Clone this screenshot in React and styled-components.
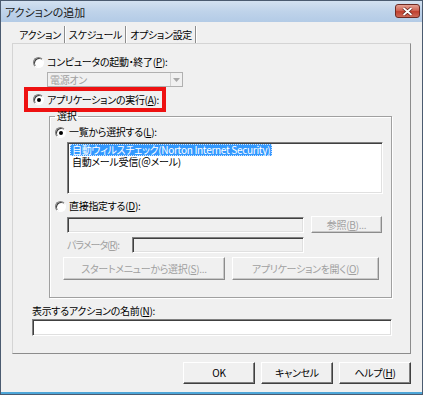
import React from "react";
import styled, { createGlobalStyle } from "styled-components";

const GlobalStyle = createGlobalStyle`
  html, body {
    margin: 0;
    padding: 0;
    background: #f0f0f0;
  }
  body {
    font-family: "Noto Sans CJK JP", "Noto Sans", sans-serif;
    font-size: 10px;
    line-height: 12px;
    font-feature-settings: "palt";
    letter-spacing: -0.3px;
    color: #000;
  }
  * {
    box-sizing: border-box;
  }
`;

const Frame = styled.div`
  width: 423px;
  height: 395px;
  display: flex;
  flex-direction: column;
  background: #f0f0f0;
  border: 1px solid #4b5b70;
  box-shadow: inset 0 -2px 0 #4ea6d8;
`;

const TitleBar = styled.div`
  height: 21px;
  flex: none;
  display: flex;
  align-items: center;
  justify-content: space-between;
  padding: 0 2px 0 4px;
  background: linear-gradient(to bottom, #d3e1f0 0%, #bfd3ea 50%, #b3cbe6 100%);
`;

const Title = styled.span`
  font-size: 11px;
  letter-spacing: 0;
  color: #1b1b1b;
`;

const CloseButton = styled.div`
  width: 25px;
  height: 14px;
  margin-top: -1px;
  border: 1px solid #6e2a22;
  border-radius: 3px;
  display: flex;
  align-items: center;
  justify-content: center;
  background: linear-gradient(to bottom, #e4a092 0%, #d06656 45%, #c0402f 55%, #cd6a58 100%);
`;

const Body = styled.div`
  flex: 1;
  display: flex;
  flex-direction: column;
  padding: 4px 11px 0 11px;
`;

const TabBar = styled.div`
  display: flex;
  height: 17px;
  padding-left: 3px;
`;

const Tab = styled.div`
  display: flex;
  align-items: center;
  padding: 0 3px 0 4px;
  border-right: 1px solid #8c8c8c;
  box-shadow: 1px 0 0 #fff;
  color: #000;
`;

const Panel = styled.div`
  height: 311px;
  display: flex;
  flex-direction: column;
  padding: 12px 18px 0 11px;
  border: 1px solid;
  border-color: #d4d4d4 #8c8c8c #8c8c8c #d4d4d4;
`;

const RadioRow = styled.label`
  display: flex;
  align-items: center;
  height: 12px;
  margin-top: ${(p) => p.$top || 0}px;
  margin-left: ${(p) => p.$indent || 0}px;
  color: ${(p) => (p.$disabled ? "#a0a0a0" : "#000")};
`;

const RadioDot = styled.span`
  position: relative;
  flex: none;
  width: 11px;
  height: 11px;
  margin-right: 3px;
  border-radius: 50%;
  background: #fff;
  border: 1px solid;
  border-color: #808080 #fff #fff #808080;
  box-shadow: inset 1px 1px 0 #404040;

  &::after {
    content: "";
    display: ${(p) => (p.$checked ? "block" : "none")};
    position: absolute;
    left: 3px;
    top: 3px;
    width: 4px;
    height: 4px;
    border-radius: 50%;
    background: #000;
  }
`;

const Select = styled.div`
  display: flex;
  width: 136px;
  height: 15px;
  margin: 4px 0 0 23px;
  border: 1px solid #b0b0b0;
  background: #f0f0f0;
  color: #a0a0a0;
`;

const SelectValue = styled.span`
  flex: 1;
  padding-left: 2px;
  line-height: 13px;
`;

const SelectArrow = styled.span`
  width: 12px;
  display: flex;
  align-items: center;
  justify-content: center;
  border-left: 1px solid #d0d0d0;
`;

const Highlight = styled.div`
  align-self: flex-start;
  display: flex;
  align-items: center;
  height: 25px;
  padding: 0 3px 0 5px;
  border: 4px solid #ee1111;
`;

const Group = styled.fieldset`
  margin: -2px 0 0 25px;
  padding: 2px 9px 0 5px;
  min-width: 0;
  height: 188px;
  border: 1px solid #a0a0a0;
  box-shadow: inset 1px 1px 0 #fff, 1px 1px 0 #fff;
`;

const Legend = styled.legend`
  padding: 0 2px;
  line-height: 12px;
`;

const ListBox = styled.div`
  display: flex;
  flex-direction: column;
  align-items: flex-start;
  width: 316px;
  height: 52px;
  margin: 4px 0 0 12px;
  padding: 1px 2px;
  background: #fff;
  border: 1px solid;
  border-color: #808080 #fff #fff #808080;
  box-shadow: inset 1px 1px 0 #404040, inset -1px -1px 0 #e0e0e0;
`;

const ListItem = styled.div`
  height: 12px;
  line-height: 12px;
  padding: 0 2px;
  white-space: nowrap;
  background: ${(p) => (p.$selected ? "#3399ff" : "transparent")};
  color: ${(p) => (p.$selected ? "#fff" : "#000")};
  outline: ${(p) => (p.$selected ? "1px dotted #cfe4ff" : "none")};
  outline-offset: -1px;
`;

const FieldRow = styled.div`
  display: flex;
  align-items: center;
  gap: ${(p) => p.$gap ?? 7}px;
  margin-top: ${(p) => p.$top || 0}px;
  margin-left: ${(p) => p.$indent || 0}px;
`;

const TextBox = styled.div`
  flex: none;
  width: ${(p) => (p.$width ? `${p.$width}px` : "auto")};
  height: ${(p) => p.$height || 16}px;
  margin-left: ${(p) => p.$indent || 0}px;
  margin-top: ${(p) => p.$top || 0}px;
  background: ${(p) => (p.$disabled ? "#f0f0f0" : "#fff")};
  border: 1px solid;
  border-color: #808080 #fff #fff #808080;
  box-shadow: inset 1px 1px 0 #404040, inset -1px -1px 0 #e0e0e0;
`;

const FieldLabel = styled.span`
  flex: none;
  white-space: nowrap;
  color: ${(p) => (p.$disabled ? "#a0a0a0" : "#000")};
  margin-left: ${(p) => p.$indent || 0}px;
  margin-top: ${(p) => p.$top || 0}px;
  width: ${(p) => (p.$width ? `${p.$width}px` : "auto")};
  letter-spacing: ${(p) => (p.$tight ? "-1px" : "-0.3px")};
  line-height: 12px;
`;

const Button = styled.div`
  flex: none;
  display: flex;
  align-items: center;
  justify-content: center;
  white-space: nowrap;
  width: ${(p) => p.$width}px;
  height: ${(p) => p.$height || 22}px;
  background: #f0f0f0;
  color: ${(p) => (p.$disabled ? "#a0a0a0" : "#000")};
  border: 1px solid;
  border-color: ${(p) =>
    p.$disabled ? "#fff #8c8c8c #8c8c8c #fff" : "#fff #404040 #404040 #fff"};
  box-shadow: ${(p) =>
    p.$disabled ? "inset -1px -1px 0 #c8c8c8" : "inset -1px -1px 0 #808080"};
`;

const ButtonBar = styled.div`
  display: flex;
  justify-content: flex-end;
  gap: 6px;
  margin-top: 8px;
`;

function Radio({ checked, children, top, indent, disabled }) {
  return (
    <RadioRow $top={top} $indent={indent} $disabled={disabled}>
      <RadioDot $checked={checked} />
      <span>{children}</span>
    </RadioRow>
  );
}

export default function App() {
  return (
    <>
      <GlobalStyle />
      <Frame>
        <TitleBar>
          <Title>アクションの追加</Title>
          <CloseButton>
            <svg width="11" height="9" viewBox="0 0 11 9">
              <path d="M1.5 1 L9.5 8 M9.5 1 L1.5 8" stroke="#5a1a14" strokeWidth="3.2" />
              <path d="M1.5 1 L9.5 8 M9.5 1 L1.5 8" stroke="#fff" strokeWidth="1.8" />
            </svg>
          </CloseButton>
        </TitleBar>

        <Body>
          <TabBar>
            <Tab>アクション</Tab>
            <Tab>スケジュール</Tab>
            <Tab>オプション設定</Tab>
          </TabBar>

          <Panel>
            <Radio indent={9}>
              コンピュータの起動・終了(<u>P</u>):
            </Radio>
            <Select>
              <SelectValue>電源オン</SelectValue>
              <SelectArrow>
                <svg width="7" height="4" viewBox="0 0 7 4">
                  <path d="M0 0 H7 L3.5 4 Z" fill="#a8a8a8" />
                </svg>
              </SelectArrow>
            </Select>

            <Highlight>
              <Radio checked>
                アプリケーションの実行(<u>A</u>):
              </Radio>
            </Highlight>

            <Group>
              <Legend>選択</Legend>
              <Radio checked top={2}>
                一覧から選択する(<u>L</u>):
              </Radio>
              <ListBox>
                <ListItem $selected>
                  自動ウィルスチェック(Norton Internet Security)
                </ListItem>
                <ListItem>自動メール受信(＠メール)</ListItem>
              </ListBox>

              <Radio top={6}>
                直接指定する(<u>D</u>):
              </Radio>
              <FieldRow $top={4} $indent={12}>
                <TextBox $width={237} $disabled />
                <Button $width={71} $height={17} $disabled>
                  参照(<u>B</u>)...
                </Button>
              </FieldRow>
              <FieldRow $top={4} $indent={12} $gap={0}>
                <FieldLabel $disabled $tight $width={65}>
                  パラメータ(<u>R</u>):
                </FieldLabel>
                <TextBox $width={172} $disabled />
              </FieldRow>
              <FieldRow $top={4} $indent={8}>
                <Button $width={162} $height={23} $disabled>
                  スタートメニューから選択(<u>S</u>)...
                </Button>
                <Button $width={147} $height={23} $disabled>
                  アプリケーションを開く(<u>O</u>)
                </Button>
              </FieldRow>
            </Group>

            <FieldLabel $indent={8} $top={7}>
              表示するアクションの名前(<u>N</u>):
            </FieldLabel>
            <TextBox $indent={8} $top={2} $height={17} />
          </Panel>

          <ButtonBar>
            <Button $width={72}>OK</Button>
            <Button $width={72}>キャンセル</Button>
            <Button $width={72}>
              ヘルプ(<u>H</u>)
            </Button>
          </ButtonBar>
        </Body>
      </Frame>
    </>
  );
}
